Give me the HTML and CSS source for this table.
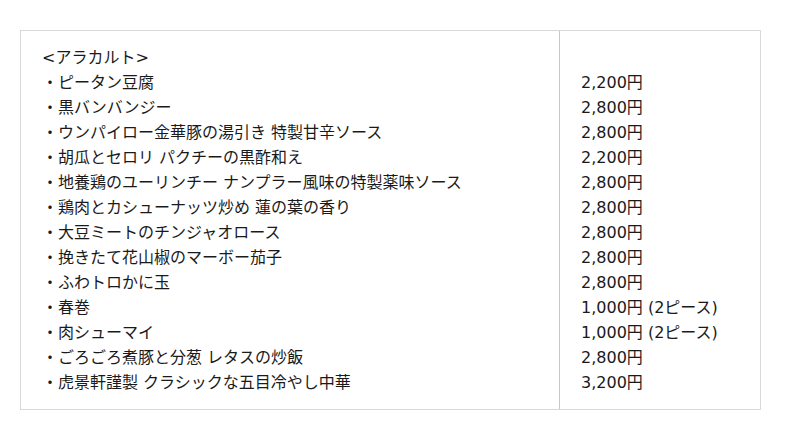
FILE: index.html
```html
<!DOCTYPE html>
<html lang="ja">
<head>
<meta charset="utf-8">
<link rel="stylesheet" href="styles.css">
</head>
<body>
<div class="menu">
  <div class="cell items">
    <div>&lt;アラカルト&gt;</div>
    <div>・ピータン豆腐</div>
    <div>・黒バンバンジー</div>
    <div>・ウンパイロー金華豚の湯引き 特製甘辛ソース</div>
    <div>・胡瓜とセロリ パクチーの黒酢和え</div>
    <div>・地養鶏のユーリンチー ナンプラー風味の特製薬味ソース</div>
    <div>・鶏肉とカシューナッツ炒め 蓮の葉の香り</div>
    <div>・大豆ミートのチンジャオロース</div>
    <div>・挽きたて花山椒のマーボー茄子</div>
    <div>・ふわトロかに玉</div>
    <div>・春巻</div>
    <div>・肉シューマイ</div>
    <div>・ごろごろ煮豚と分葱 レタスの炒飯</div>
    <div>・虎景軒謹製 クラシックな五目冷やし中華</div>
  </div>
  <div class="cell prices">
    <div>&nbsp;</div>
    <div>2,200円</div>
    <div>2,800円</div>
    <div>2,800円</div>
    <div>2,200円</div>
    <div>2,800円</div>
    <div>2,800円</div>
    <div>2,800円</div>
    <div>2,800円</div>
    <div>2,800円</div>
    <div>1,000円 (2ピース)</div>
    <div>1,000円 (2ピース)</div>
    <div>2,800円</div>
    <div>3,200円</div>
  </div>
</div>
</body>
</html>
```
FILE: styles.css
```css
html, body {
  margin: 0;
  padding: 0;
  background: #fff;
}
body {
  padding: 30px 0 0 20px;
  font-family: "DejaVu Sans", "Noto Sans CJK JP", sans-serif;
  font-size: 16px;
  line-height: 25px;
  color: #1a1a1a;
}
.menu {
  display: grid;
  grid-template-columns: 539px 202px;
  width: 741px;
  box-sizing: border-box;
  border: 1px solid #d9d9d9;
}
.cell {
  padding: 14px 21px 14px 21px;
}
.items {
  border-right: 1px solid #c8c8c8;
}
.items div, .prices div {
  white-space: nowrap;
}
```
